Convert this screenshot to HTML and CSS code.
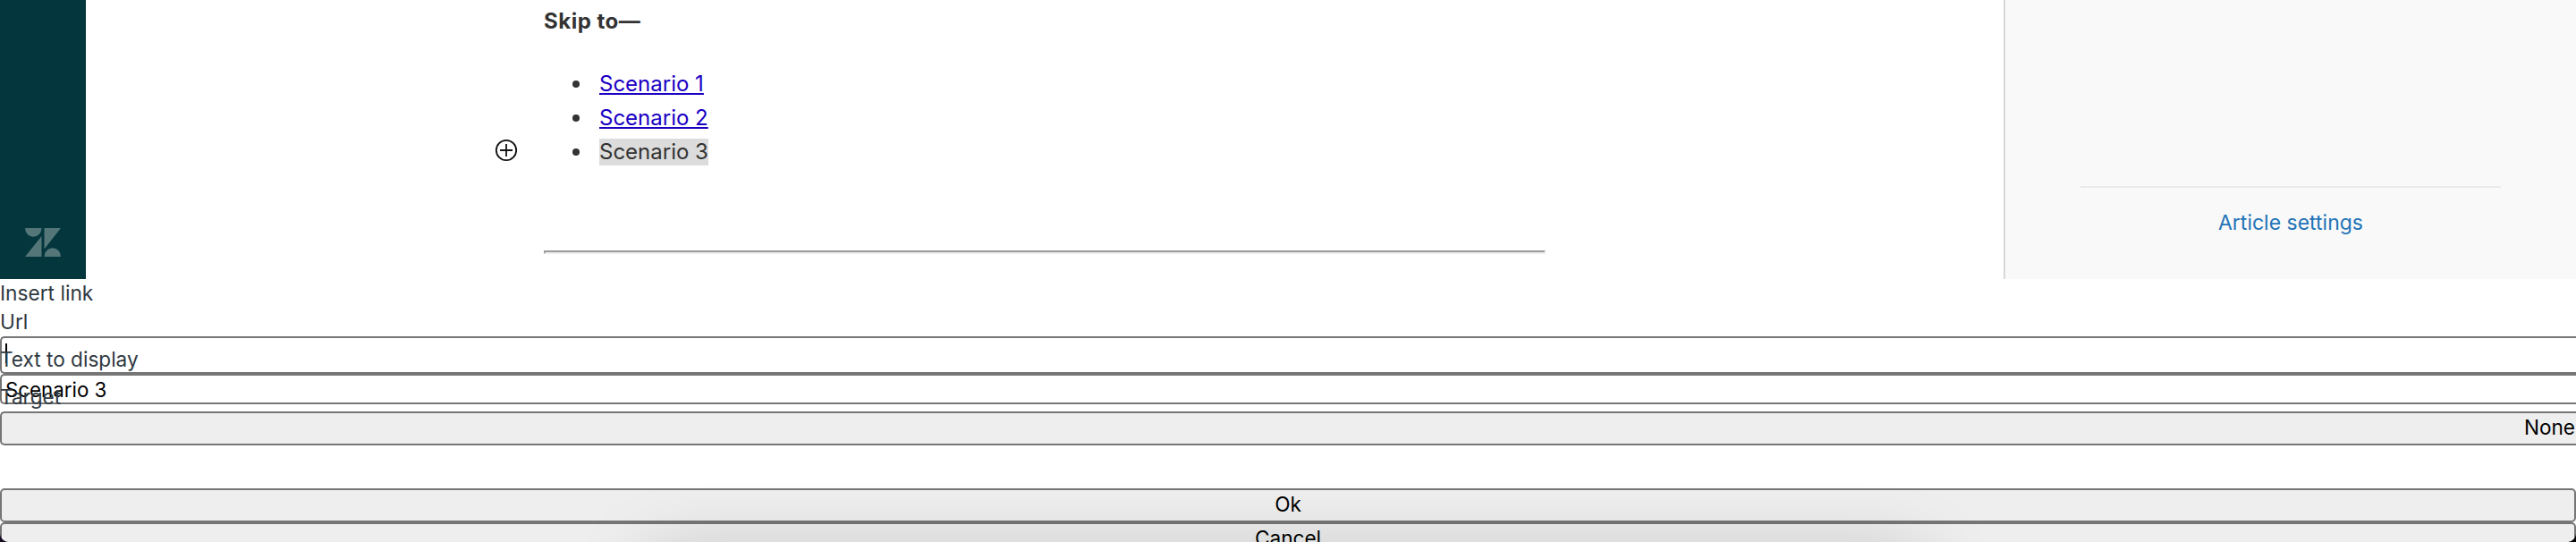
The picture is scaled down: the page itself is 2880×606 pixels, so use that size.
FILE: index.html
```html
<!DOCTYPE html>
<html lang="en">
<head>
  <meta charset="utf-8">
  <title>Edit article</title>
  <link rel="stylesheet" href="styles.css">
</head>
<body>
  <div class="app">
    <nav class="sidebar">
      <svg class="logo" width="40" height="32" viewBox="0 0 40 32">
        <path d="M0 0h18.500a9.250 9.800 0 0 1-18.500 0zM18.500 9v23H0zM21.500 0H40L21.500 23.500zM21.500 32a9.250 9.800 0 0 1 18.500 0z"/>
      </svg>
    </nav>
    <main class="editor">
      <div class="gutter">
        <svg width="26" height="26" viewBox="0 0 26 26">
          <circle cx="13" cy="13" r="11.200"/>
          <path d="M13 6v14M6 13h14"/>
        </svg>
      </div>
      <article class="article">
        <p><strong>Skip to—</strong></p>
        <ul>
          <li><a href="#scenario-1">Scenario 1</a></li>
          <li><a href="#scenario-2">Scenario 2</a></li>
          <li><span class="selected">Scenario 3</span></li>
        </ul>
        <hr>
      </article>
    </main>
    <aside class="settings">
      <a class="settings-link" href="#settings">Article settings</a>
    </aside>
  </div>

  <div class="dialog">
    <div class="title">Insert link</div>
    <div class="label">Url</div>
    <div class="field url">
      <span class="caret"></span>
    </div>
    <div class="field text">
      <label class="over">Text to display</label>
      <span class="value">Scenario 3</span>
    </div>
    <div class="field target">
      <label class="over">Target</label>
      <button class="select">None</button>
    </div>
    <button class="button">Ok</button>
    <button class="button">Cancel</button>
  </div>

  <div class="shadow"></div>
  <div class="corner left"></div>
  <div class="corner right"></div>
</body>
</html>
```

FILE: styles.css
```css
* {
  box-sizing: border-box;
}

body {
  position: relative;
  height: 606px;
  margin: 0;
  overflow: hidden;
  background: #fff;
  color: #2f3941;
  font-family: Inter, "Liberation Sans", sans-serif;
  font-size: 23px;
  line-height: 32px;
}

.app {
  display: flex;
  height: 312px;
}

.sidebar {
  display: flex;
  flex-direction: column;
  justify-content: flex-end;
  align-items: center;
  width: 96px;
  padding-bottom: 25px;
  background: #03363d;
}

.logo {
  display: block;
  fill: #557679;
}

.editor {
  display: flex;
  flex: 1;
}

.gutter {
  width: 512px;
  padding: 155px 0 0 457px;
}

.gutter svg {
  display: block;
  fill: none;
  stroke: #111;
  stroke-width: 1.8;
}

.article {
  width: 1120px;
  color: #333;
  font-size: 24px;
  line-height: 38px;
}

.article p {
  margin: 5px 0 32px;
  letter-spacing: .5px;
}

.article ul {
  margin: 0;
  padding-left: 32px;
  list-style: none;
}

.article li {
  display: flex;
  align-items: center;
  gap: 22px;
  height: 38px;
}

.article li::before {
  content: "";
  width: 8px;
  height: 8px;
  border-radius: 50%;
  background: #333;
}

.article a {
  color: #1a00c4;
  text-decoration-thickness: 2px;
  text-underline-offset: 2px;
}

.selected {
  height: 30px;
  background: #dcdcdc;
  line-height: 30px;
}

.article hr {
  height: 4px;
  margin: 91px 0 0;
  border: 2px solid;
  border-color: #9a9a9a #eee #eee #9a9a9a;
}

.settings {
  width: 640px;
  padding: 208px 84px 0;
  border-left: 2px solid #d8d8d8;
  background: #f9f9f9;
}

.settings-link {
  display: block;
  padding-top: 23px;
  border-top: 2px solid #ebebeb;
  color: #1f73b7;
  text-align: center;
  text-decoration: none;
}

.title,
.label {
  height: 32px;
  font-size: 22.7px;
}

.field {
  position: relative;
  border: 2px solid #767676;
  border-right: 0;
  border-radius: 5px 0 0 5px;
}

.url {
  height: 42px;
}

.text {
  height: 34px;
}

.target {
  height: 38px;
  margin: 8px 0 48px;
  border: 0;
}

/* labels sit on top of the field above them */
.over {
  position: absolute;
  z-index: 1;
  left: -2px;
  top: -34px;
  font-size: 22.6px;
}

.target .over {
  left: 0;
  top: -32px;
}

.caret {
  position: absolute;
  left: 4px;
  top: 6px;
  width: 2px;
  height: 22px;
  background: #000;
}

.value {
  display: block;
  padding: 1px 0 0 4px;
  color: #000;
  font-size: 22.3px;
  line-height: 30px;
}

.select,
.button {
  display: block;
  width: 100%;
  height: 38px;
  padding: 0 0 2px;
  border: 2px solid #767676;
  border-radius: 5px;
  background: #eee;
  color: #000;
  font: inherit;
  font-size: 22.6px;
  text-align: center;
}

.select {
  padding-right: 1px;
  border-right: 0;
  border-radius: 5px 0 0 5px;
  text-align: right;
}

.shadow {
  position: absolute;
  left: 726px;
  top: 626px;
  width: 1424px;
  height: 200px;
  box-shadow: 0 0 86px rgba(0, 0, 0, .22);
}

.corner {
  position: absolute;
  bottom: 0;
  width: 10px;
  height: 10px;
}

.corner.left {
  left: 0;
  background: radial-gradient(circle at 100% 0, transparent 9.5px, #150a24 10.5px);
}

.corner.right {
  right: 0;
  background: radial-gradient(circle at 0 0, transparent 9.5px, #000 10.5px);
}
```
